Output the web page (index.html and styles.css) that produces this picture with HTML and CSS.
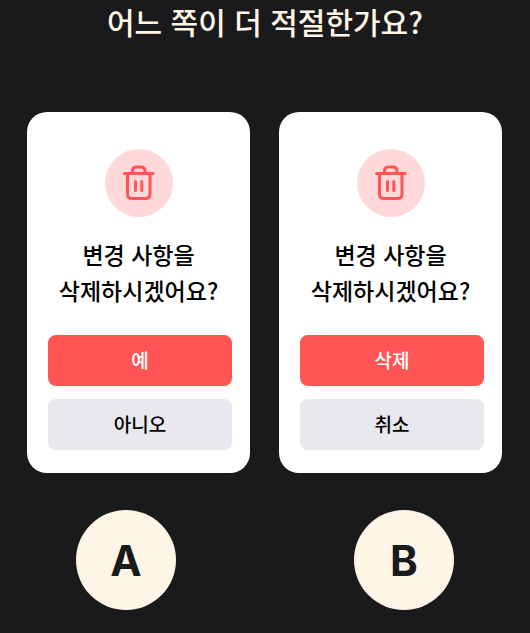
FILE: index.html
```html
<!DOCTYPE html>
<html lang="ko">
<head>
    <meta charset="UTF-8">
    <meta name="viewport" content="width=device-width, initial-scale=1.0">
    <title>어느 쪽이 더 적절한가요?</title>
    <link rel="stylesheet" href="styles.css">
</head>
<body>
    <h1>어느 쪽이 더 적절한가요?</h1>

    <main class="cards">
        <section class="card">
            <div class="icon">
                <svg width="34" height="38" viewBox="0 0 34 38" aria-hidden="true">
                    <path d="M2.500 9.500H31M10.500 9.500V7Q10.500 3 14.500 3H19Q23 3 23 7V9.500M5.500 9.500V30Q5.500 34.500 10 34.500H23.500Q28 34.500 28 30V9.500M13.500 17.500V26.500M19.800 17.500V26.500"/>
                </svg>
            </div>
            <h2>변경 사항을<br>삭제하시겠어요?</h2>
            <div class="buttons">
                <button type="button" class="btn btn-danger">예</button>
                <button type="button" class="btn">아니오</button>
            </div>
        </section>

        <section class="card">
            <div class="icon">
                <svg width="34" height="38" viewBox="0 0 34 38" aria-hidden="true">
                    <path d="M2.500 9.500H31M10.500 9.500V7Q10.500 3 14.500 3H19Q23 3 23 7V9.500M5.500 9.500V30Q5.500 34.500 10 34.500H23.500Q28 34.500 28 30V9.500M13.500 17.500V26.500M19.800 17.500V26.500"/>
                </svg>
            </div>
            <h2>변경 사항을<br>삭제하시겠어요?</h2>
            <div class="buttons">
                <button type="button" class="btn btn-danger">삭제</button>
                <button type="button" class="btn">취소</button>
            </div>
        </section>
    </main>

    <div class="labels">
        <div class="label" lang="en">A</div>
        <div class="label" lang="en">B</div>
    </div>
</body>
</html>
```
FILE: styles.css
```css
* { box-sizing: border-box; }
body { margin: 0; background: #1a1a1c; font-family: "Noto Sans CJK KR", sans-serif; }
h1 { margin: 0; color: #fff5e6; font-size: 30px; font-weight: 500; line-height: 42px; text-align: center; }

.cards { display: grid; grid-template-columns: 1fr 1fr; gap: 29px; padding: 70px 28px 0 27px; }
.card { padding: 37px 0 23px; background: #fff; border-radius: 20px; text-align: center; }
.icon { display: flex; align-items: center; justify-content: center; width: 68px; height: 68px; margin: 0 auto; background: #ffd9d9; border-radius: 50%; }
.icon path { fill: none; stroke: #ff5555; stroke-width: 3; stroke-linecap: round; stroke-linejoin: round; }
h2 { margin: 19px 0 27px; color: #000; font-size: 23px; font-weight: 500; line-height: 36px; white-space: nowrap; }

.buttons { display: flex; flex-direction: column; gap: 13px; padding: 0 18px 0 21px; }
.btn { height: 51px; padding: 0 0 2px; border: none; border-radius: 8px; background: #e9e8ee; color: #000; font-family: inherit; font-size: 19px; font-weight: 500; cursor: pointer; }
.btn-danger { background: #ff5555; color: #fff; }

.labels { display: flex; justify-content: space-between; padding: 37px 76px 23px; }
.label { display: flex; align-items: center; justify-content: center; width: 100px; height: 100px; background: #fff5e6; border-radius: 50%; color: #1a1a1c; font-family: "Inter", "Liberation Sans", sans-serif; font-size: 42px; font-weight: 700; }
```
